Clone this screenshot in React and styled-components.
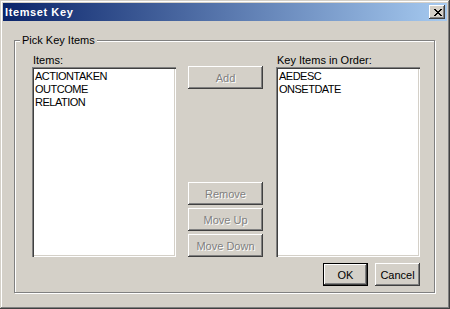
import React from 'react'
import styled, { createGlobalStyle } from 'styled-components'

const GlobalStyle = createGlobalStyle`
  html, body {
    margin: 0;
    padding: 0;
    background: #d4d0c8;
  }
  * {
    box-sizing: border-box;
  }
`;

const sourceItems = ['ACTIONTAKEN', 'OUTCOME', 'RELATION'];
const keyItems = ['AEDESC', 'ONSETDATE'];

const CloseGlyph = () => (
  <svg width="8" height="7" viewBox="0 0 8 7" shapeRendering="crispEdges">
    <path
      fill="#000"
      d="M0 0h2v1H0z M6 0h2v1H6z M1 1h2v1H1z M5 1h2v1H5z M2 2h4v1H2z M3 3h2v1H3z M2 4h4v1H2z M1 5h2v1H1z M5 5h2v1H5z M0 6h2v1H0z M6 6h2v1H6z"
    />
  </svg>
);

const App = () => {
  return (
    <>
      <GlobalStyle />
      <Window>
        <TitleBar>
          <Title>Itemset Key</Title>
          <CloseButton aria-label="Close">
            <CloseGlyph />
          </CloseButton>
        </TitleBar>
        <Content>
          <Group>
            <Legend>Pick Key Items</Legend>
            <GroupBody>
              <Columns>
                <ListColumn>
                  <Label>Items:</Label>
                  <ListBox>
                    {sourceItems.map((item) => (
                      <ListItem key={item}>{item}</ListItem>
                    ))}
                  </ListBox>
                </ListColumn>
                <ButtonColumn>
                  <PushButton disabled>Add</PushButton>
                  <ButtonStack>
                    <PushButton disabled>Remove</PushButton>
                    <PushButton disabled>Move Up</PushButton>
                    <PushButton disabled>Move Down</PushButton>
                  </ButtonStack>
                </ButtonColumn>
                <ListColumn>
                  <Label>Key Items in Order:</Label>
                  <ListBox>
                    {keyItems.map((item) => (
                      <ListItem key={item}>{item}</ListItem>
                    ))}
                  </ListBox>
                </ListColumn>
              </Columns>
              <Footer>
                <DialogButton $default>OK</DialogButton>
                <DialogButton>Cancel</DialogButton>
              </Footer>
            </GroupBody>
          </Group>
        </Content>
      </Window>
    </>
  );
};

const Window = styled.div`
  width: 450px;
  height: 309px;
  padding: 3px;
  display: flex;
  flex-direction: column;
  background: #d4d0c8;
  font-family: 'Liberation Sans', Arial, sans-serif;
  font-size: 11px;
  line-height: 13px;
  color: #000;
  box-shadow:
    inset -1px -1px 0 #404040,
    inset 1px 1px 0 #d4d0c8,
    inset -2px -2px 0 #808080,
    inset 2px 2px 0 #fff;
`;

const TitleBar = styled.div`
  height: 18px;
  display: flex;
  align-items: center;
  justify-content: space-between;
  padding: 0 2px;
  background: linear-gradient(to right, #0a246a, #a6caf0);
`;

const Title = styled.span`
  color: #fff;
  font-weight: bold;
  font-size: 11px;
  letter-spacing: 0.6px;
`;

const CloseButton = styled.div`
  width: 16px;
  height: 14px;
  display: flex;
  align-items: center;
  justify-content: center;
  padding-left: 1px;
  background: #d4d0c8;
  box-shadow:
    inset -1px -1px 0 #404040,
    inset 1px 1px 0 #fff,
    inset -2px -2px 0 #808080;
`;

const Content = styled.div`
  flex: 1;
  padding: 13px 12px 13px 11px;
  display: flex;
`;

const Group = styled.fieldset`
  flex: 1;
  margin: 0;
  padding: 0;
  border: 1px solid #808080;
  box-shadow:
    inset 1px 1px 0 #fff,
    1px 1px 0 #fff;
  display: flex;
  flex-direction: column;
  min-width: 0;
`;

const Legend = styled.legend`
  margin-left: 5px;
  padding: 0 2px;
  background: #d4d0c8;
  line-height: 13px;
`;

const GroupBody = styled.div`
  flex: 1;
  display: flex;
  flex-direction: column;
  padding: 7px 14px 5px 17px;
`;

const Columns = styled.div`
  display: flex;
  align-items: stretch;
`;

const ListColumn = styled.div`
  width: 144px;
  display: flex;
  flex-direction: column;
`;

const Label = styled.div`
  height: 13px;
  padding-left: 1px;
`;

const ListBox = styled.div`
  height: 190px;
  padding: 3px 3px;
  background: #fff;
  box-shadow:
    inset 1px 1px 0 #808080,
    inset 2px 2px 0 #404040,
    inset -1px -1px 0 #fff,
    inset -2px -2px 0 #d4d0c8;
`;

const ListItem = styled.div`
  height: 13px;
  white-space: nowrap;
  letter-spacing: -0.5px;
`;

const ButtonColumn = styled.div`
  width: 75px;
  margin: 0 13px 0 12px;
  padding-top: 12px;
  display: flex;
  flex-direction: column;
  justify-content: space-between;
`;

const ButtonStack = styled.div`
  display: flex;
  flex-direction: column;
  gap: 3px;
`;

const PushButton = styled.button`
  width: 75px;
  height: 23px;
  padding: 0;
  border: none;
  background: #d4d0c8;
  font-family: inherit;
  font-size: 11px;
  color: #000;
  box-shadow:
    inset -1px -1px 0 #404040,
    inset 1px 1px 0 #fff,
    inset -2px -2px 0 #808080,
    inset 2px 2px 0 #d4d0c8;
  &:disabled {
    color: #808080;
    text-shadow: 1px 1px 0 #fff;
  }
`;

const Footer = styled.div`
  margin-top: 6px;
  display: flex;
  justify-content: flex-end;
  gap: 7px;
`;

const DialogButton = styled(PushButton)`
  width: 45px;
  border: ${(p) => (p.$default ? '1px solid #000' : 'none')};
`;

export default App;
